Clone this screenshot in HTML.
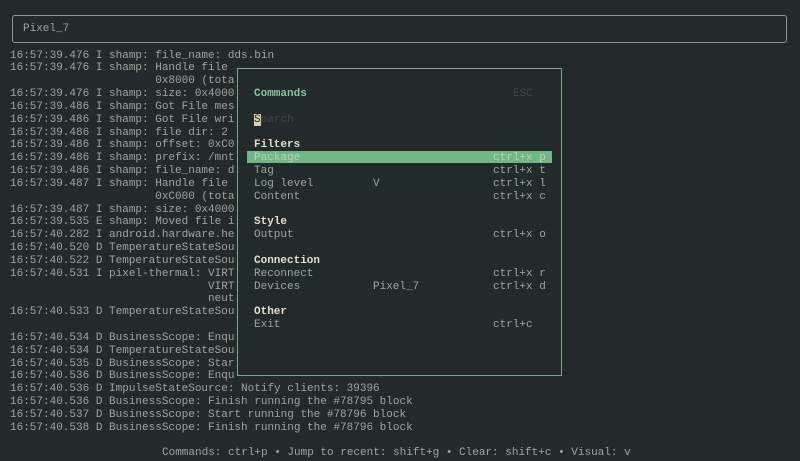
<!DOCTYPE html>
<html><head><meta charset="utf-8"><style>
html,body{margin:0;padding:0;width:800px;height:461px;overflow:hidden;background:#222a2c;}
body{position:relative;font-family:"Liberation Mono",monospace;font-size:11px;color:#a2a49c;}
.l{position:absolute;left:10px;height:13px;line-height:13px;white-space:pre;}
#box{position:absolute;left:12px;top:15px;width:773px;height:26px;border:1px solid #8a9a8c;border-radius:3px;}
#modal{position:absolute;left:237px;top:68px;width:323px;height:306px;border:1px solid #7fa58a;background:#222a2c;}
.bar{position:absolute;left:247px;top:151px;width:305px;height:12px;background:#72b686;}
.g{color:#86c49a;font-weight:bold;}
.h{color:#e2ddd0;font-weight:bold;}
.cur{background:#d9cfb0;color:#222a2c;}
.dim{color:#3e4648;}
.a{left:254px}.v{left:373px}.c{left:493px}
</style></head><body>
<div id="box"></div>
<div class="l" style="top:22.5px;left:23px">Pixel_7</div>
<div class="l" style="top:49.5px">16:57:39.476 I shamp: file_name: dds.bin</div>
<div class="l" style="top:62.3px">16:57:39.476 I shamp: Handle file</div>
<div class="l" style="top:75.2px">                      0x8000 (tota</div>
<div class="l" style="top:88px">16:57:39.476 I shamp: size: 0x4000</div>
<div class="l" style="top:100.8px">16:57:39.486 I shamp: Got File mes</div>
<div class="l" style="top:113.7px">16:57:39.486 I shamp: Got File wri</div>
<div class="l" style="top:126.5px">16:57:39.486 I shamp: file dir: 2</div>
<div class="l" style="top:139.3px">16:57:39.486 I shamp: offset: 0xC0</div>
<div class="l" style="top:152.2px">16:57:39.486 I shamp: prefix: /mnt</div>
<div class="l" style="top:165px">16:57:39.486 I shamp: file_name: d</div>
<div class="l" style="top:177.8px">16:57:39.487 I shamp: Handle file</div>
<div class="l" style="top:190.7px">                      0xC000 (tota</div>
<div class="l" style="top:203.5px">16:57:39.487 I shamp: size: 0x4000</div>
<div class="l" style="top:216.3px">16:57:39.535 E shamp: Moved file i</div>
<div class="l" style="top:229.2px">16:57:40.282 I android.hardware.he</div>
<div class="l" style="top:242px">16:57:40.520 D TemperatureStateSou</div>
<div class="l" style="top:254.8px">16:57:40.522 D TemperatureStateSou</div>
<div class="l" style="top:267.7px">16:57:40.531 I pixel-thermal: VIRT</div>
<div class="l" style="top:280.5px">                              VIRT</div>
<div class="l" style="top:293.3px">                              neut</div>
<div class="l" style="top:306.2px">16:57:40.533 D TemperatureStateSou</div>
<div class="l" style="top:331.8px">16:57:40.534 D BusinessScope: Enqu</div>
<div class="l" style="top:344.7px">16:57:40.534 D TemperatureStateSou</div>
<div class="l" style="top:357.5px">16:57:40.535 D BusinessScope: Star</div>
<div class="l" style="top:370.3px">16:57:40.536 D BusinessScope: Enqu</div>
<div class="l" style="top:383.2px">16:57:40.536 D ImpulseStateSource: Notify clients: 39396</div>
<div class="l" style="top:396px">16:57:40.536 D BusinessScope: Finish running the #78795 block</div>
<div class="l" style="top:408.8px">16:57:40.537 D BusinessScope: Start running the #78796 block</div>
<div class="l" style="top:421.7px">16:57:40.538 D BusinessScope: Finish running the #78796 block</div>
<div class="l" style="top:447.3px;left:162px">Commands: ctrl+p • Jump to recent: shift+g • Clear: shift+c • Visual: v</div>

<div id="modal"></div>
<div class="bar"></div>
<div class="l g a" style="top:88px">Commands</div>
<div class="l dim" style="top:88px;left:513px">ESC</div>
<div class="l a" style="top:113.7px"><span class="cur">S</span><span class="dim">earch</span></div>
<div class="l h a" style="top:139.3px">Filters</div>
<div class="l a" style="top:152.2px;color:#b8d4bc">Package</div><div class="l c" style="top:152.2px;color:#b8d4bc">ctrl+x p</div>
<div class="l a" style="top:165px">Tag</div><div class="l c" style="top:165px">ctrl+x t</div>
<div class="l a" style="top:177.8px">Log level</div><div class="l v" style="top:177.8px">V</div><div class="l c" style="top:177.8px">ctrl+x l</div>
<div class="l a" style="top:190.7px">Content</div><div class="l c" style="top:190.7px">ctrl+x c</div>
<div class="l h a" style="top:216.3px">Style</div>
<div class="l a" style="top:229.2px">Output</div><div class="l c" style="top:229.2px">ctrl+x o</div>
<div class="l h a" style="top:254.8px">Connection</div>
<div class="l a" style="top:267.7px">Reconnect</div><div class="l c" style="top:267.7px">ctrl+x r</div>
<div class="l a" style="top:280.5px">Devices</div><div class="l v" style="top:280.5px">Pixel_7</div><div class="l c" style="top:280.5px">ctrl+x d</div>
<div class="l h a" style="top:306.2px">Other</div>
<div class="l a" style="top:319px">Exit</div><div class="l c" style="top:319px">ctrl+c</div>
</body></html>
